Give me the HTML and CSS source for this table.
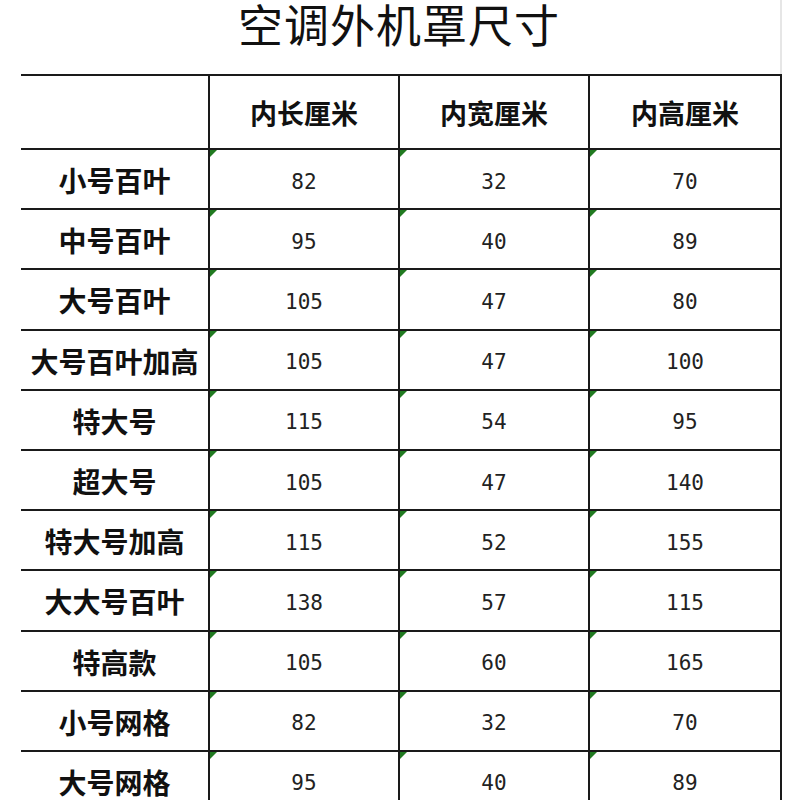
FILE: index.html
```html
<!DOCTYPE html>
<html lang="zh">
<head>
<meta charset="utf-8">
<title>空调外机罩尺寸</title>
<link rel="stylesheet" href="styles.css">
</head>
<body>
<div class="page">
  <header class="title-bar"><h1 class="title">空调外机罩尺寸</h1></header>
  <div class="sheet">
    <div class="cell head"></div>
    <div class="cell head">内长厘米</div>
    <div class="cell head">内宽厘米</div>
    <div class="cell head">内高厘米</div>

    <div class="cell label">小号百叶</div><div class="cell num">82</div><div class="cell num">32</div><div class="cell num">70</div>
    <div class="cell label">中号百叶</div><div class="cell num">95</div><div class="cell num">40</div><div class="cell num">89</div>
    <div class="cell label">大号百叶</div><div class="cell num">105</div><div class="cell num">47</div><div class="cell num">80</div>
    <div class="cell label">大号百叶加高</div><div class="cell num">105</div><div class="cell num">47</div><div class="cell num">100</div>
    <div class="cell label">特大号</div><div class="cell num">115</div><div class="cell num">54</div><div class="cell num">95</div>
    <div class="cell label">超大号</div><div class="cell num">105</div><div class="cell num">47</div><div class="cell num">140</div>
    <div class="cell label">特大号加高</div><div class="cell num">115</div><div class="cell num">52</div><div class="cell num">155</div>
    <div class="cell label">大大号百叶</div><div class="cell num">138</div><div class="cell num">57</div><div class="cell num">115</div>
    <div class="cell label">特高款</div><div class="cell num">105</div><div class="cell num">60</div><div class="cell num">165</div>
    <div class="cell label">小号网格</div><div class="cell num">82</div><div class="cell num">32</div><div class="cell num">70</div>
    <div class="cell label">大号网格</div><div class="cell num">95</div><div class="cell num">40</div><div class="cell num">89</div>
  </div>
</div>
</body>
</html>
```

FILE: styles.css
```css
html, body {
  margin: 0;
  padding: 0;
  background: #ffffff;
}
body {
  width: 800px;
  height: 800px;
  overflow: hidden;
  font-family: "Noto Sans CJK SC", "Noto Sans", sans-serif;
  color: #111;
}
.page {
  width: 782px;
}
.title-bar {
  height: 74px;
  padding-left: 18px;
  border-right: 2px solid #e6e6e6;
  box-sizing: border-box;
  display: flex;
  justify-content: center;
  align-items: flex-start;
}
.title {
  margin: 0;
  font-size: 45px;
  font-weight: 400;
  line-height: 50px;
  margin-top: -1px;
  letter-spacing: 1px;
  color: #111;
}
.sheet {
  margin-left: 21px;
  width: 761px;
  box-sizing: border-box;
  display: grid;
  grid-template-columns: 189px 190px 190px 192px;
  grid-template-rows: 74px repeat(11, 60.2px);
  border-top: 2px solid #1a1a1a;
}
.cell {
  border-right: 2px solid #1a1a1a;
  border-bottom: 2px solid #1a1a1a;
  display: flex;
  align-items: center;
  justify-content: center;
  position: relative;
  white-space: nowrap;
}
.head {
  font-size: 27px;
  font-weight: 700;
  padding-top: 1px;
}
.label {
  font-size: 28px;
  font-weight: 700;
  padding-top: 2px;
}
.num {
  font-family: "DejaVu Sans Mono", "Liberation Mono", monospace;
  font-size: 21px;
  color: #222;
  padding-top: 5px;
}
.num::before {
  content: "";
  position: absolute;
  top: 0;
  left: 0;
  width: 0;
  height: 0;
  border-top: 7px solid #217a21;
  border-right: 7px solid transparent;
}
```
